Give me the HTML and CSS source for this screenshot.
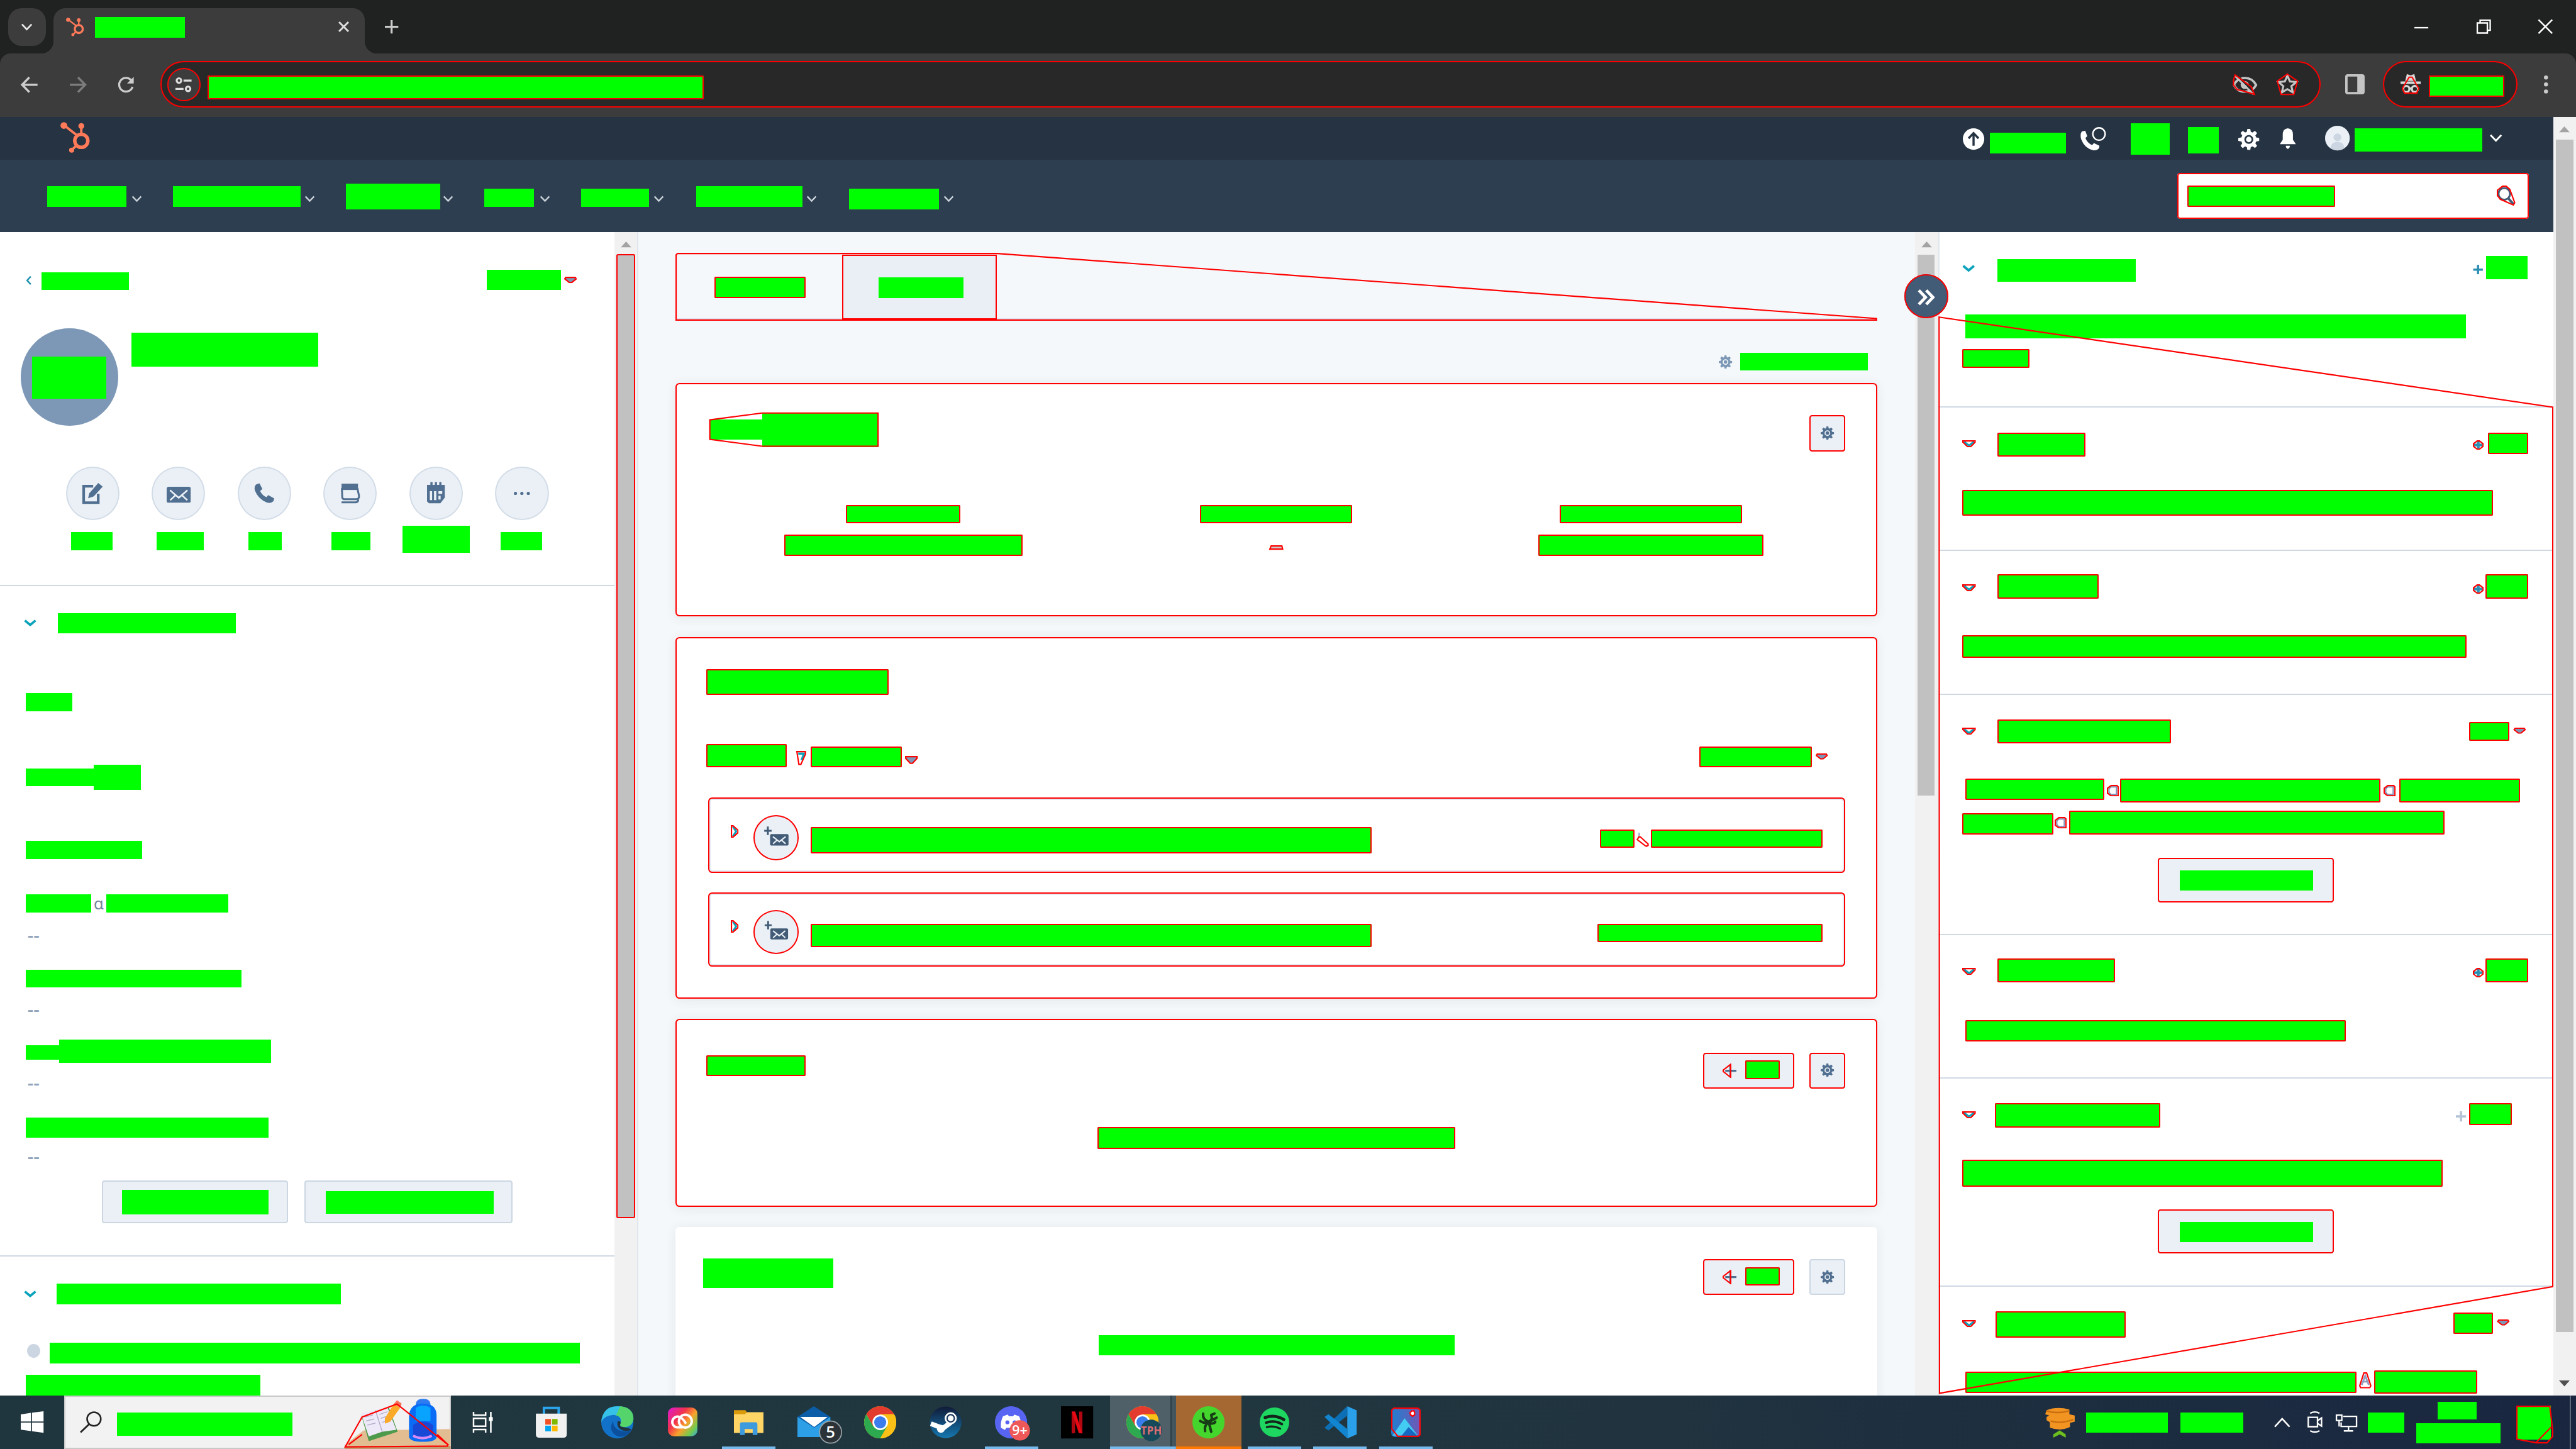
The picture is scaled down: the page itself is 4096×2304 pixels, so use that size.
FILE: index.html
```html
<!DOCTYPE html>
<html lang="en">
<head>
<meta charset="utf-8">
<title>CRM contact record</title>
<link rel="stylesheet" href="styles.css">
</head>
<body>
<svg class="defs" aria-hidden="true">
  <symbol id="sprocket" viewBox="0 0 23 23"><g fill="none" stroke="#ff7a59"><circle cx="15.6" cy="14" r="4.9" stroke-width="2.6"/><path d="M3 2.6 12.4 10M15.6 9V3.4M12 17.4 8.600 20.800" stroke-width="1.800"/></g><g fill="#ff7a59"><circle cx="2.600" cy="2.600" r="2.500"/><circle cx="15.600" cy="3" r="2.200"/><circle cx="8.400" cy="21" r="1.900"/></g></symbol>
  <symbol id="chev" viewBox="0 0 10 6"><path d="M1 .8 5 5 9 .8" fill="none" stroke="currentColor" stroke-width="1.400"/></symbol>
  <symbol id="chevbold" viewBox="0 0 10 5.300"><path d="M.8 .8 5 4.300 9.200 .8" fill="none" stroke="currentColor" stroke-width="1.900"/></symbol>
  <symbol id="chevred" viewBox="0 0 10.200 5.300"><path d="M1.200 1 5.100 4 9 1" fill="none" stroke="#0aa3bb" stroke-width="1.500"/><path d="M.5 .5H9.700V1.400L6.400 4.800H4L.5 1.400Z" class="ann"/></symbol>
  <symbol id="caret" viewBox="0 0 9.600 4.800"><path d="M1.200 .5H8.400L9.100 1.600 5.800 4.300H3.900L.5 1.600Z" fill="#7c98b6" class="annf"/></symbol>
  <symbol id="plus" viewBox="0 0 8 8"><path d="M4 0V8M0 4H8" stroke="currentColor" stroke-width="1.800"/></symbol>
  <symbol id="plusred" viewBox="0 0 8.100 7.200"><path d="M4.050 .6V6.600M.8 3.600H7.300" stroke="#2b8fb3" stroke-width="2"/><path d="M3.200 .5H4.900L7.600 2.600V4.600L4.900 6.700H3.200L.5 4.600V2.600Z" class="ann"/></symbol>
  <symbol id="gear" viewBox="0 0 16 16"><path fill="currentColor" fill-rule="evenodd" d="M6.900 0h2.200l.4 2.200 1.300.5L12.600 1.400l1.700 1.700L13 5l.6 1.400 2.400.5v2.200l-2.400.5L13 11l1.300 1.900-1.600 1.600-1.900-1.200-1.300.5L9.100 16H6.900l-.4-2.200-1.300-.5-1.800 1.300-1.700-1.700L3 11l-.6-1.400L0 9.100V6.900l2.400-.5L3 5 1.700 3.100l1.700-1.700 1.800 1.300 1.300-.5ZM8 4.600A3.400 3.400 0 1 0 8 11.400 3.400 3.400 0 0 0 8 4.600Z"/><circle cx="8" cy="8" r="2.100" fill="currentColor"/></symbol>
  <symbol id="mail" viewBox="0 0 18 12"><rect width="18" height="12" rx="1.600" fill="currentColor"/><path d="M2.500 2.600 9 8.200l6.500-5.600M2.600 10 6.700 6.200M15.400 10 11.300 6.200" fill="none" stroke="#eaf0f6" stroke-width="1.200"/></symbol>
  <symbol id="addmail" viewBox="0 0 34 34"><path d="M10.700 8.600V15M8 11.800H13.500" stroke="#425b76" stroke-width="1.400"/><rect x="12.400" y="14.300" width="13.800" height="8.600" rx="1" fill="#425b76"/><path d="M14.500 16.200 19.300 20 24 16.200M14.600 21.500 17.400 19M24 21.500 21.200 19" fill="none" stroke="#eaf0f6" stroke-width="1"/></symbol>
  <symbol id="right" viewBox="0 0 5.800 9.400"><path d="M1.600 1 4 4.700 1.600 8.400" fill="none" stroke="#0aa3bb" stroke-width="1.500"/><path d="M.5 .5H1.700L5.300 3.700V5.700L1.700 8.900H.5Z" class="ann"/></symbol>
  <symbol id="addred" viewBox="0 0 10.400 10.900"><path d="M5.800 1V10M2 5.450H10.400" stroke="#516f90" stroke-width="1.500"/><path d="M6 .6V10.300L.5 6V4.900Z" class="ann"/></symbol>
  <symbol id="letter" viewBox="0 0 9 8.600"><path d="M3 1.500H7.200V7.200H3L1.600 5.600V3Z" fill="#fff" stroke="#7f8fb8" stroke-width="1"/><path d="M3.200 .5H7.500L8.500 1.500V8.100H3L.5 6.200V2.500Z" class="ann"/></symbol>
  <symbol id="up" viewBox="0 0 8 4.400"><path d="M4 0 8 4.400H0Z" fill="currentColor"/></symbol>
  <symbol id="chrome" viewBox="0 0 24 24"><circle cx="12" cy="12" r="12" fill="#fbc116"/><path d="M1.600 6A12 12 0 0 1 22.400 6H12L6.800 15Z" fill="#e33b2e"/><path d="M1.600 6A12 12 0 0 0 12 24L17.200 15H6.800Z" fill="#2da94f"/><path d="M22.400 6A12 12 0 0 1 12 24L17.200 15 15 6Z" fill="#fbc116"/><circle cx="12" cy="12" r="5.800" fill="#fff"/><circle cx="12" cy="12" r="4.500" fill="#3b7ded"/></symbol>
</svg>

<header class="tabstrip row">
  <div class="tabsearch"><svg class="ic ts-ic"><use href="#chev"/></svg></div>
  <div class="tab row">
    <svg class="ic tab-logo"><use href="#sprocket"/></svg>
    <i class="bar tab-title"></i>
    <svg class="ic tab-x" viewBox="0 0 8 8"><path d="M.5 .5 7.500 7.500M7.500 .5 .5 7.500" stroke="#ddd" stroke-width="1.400"/></svg>
  </div>
  <svg class="ic tab-plus" viewBox="0 0 10 10"><path d="M5 0V10M0 5H10" stroke="#ccc" stroke-width="1.500"/></svg>
  <svg class="ic win-min" viewBox="0 0 10.400 1"><path d="M0 .5H10.400" stroke="#fff" stroke-width="1.100"/></svg>
  <svg class="ic win-res" viewBox="0 0 10.600 10.600"><path d="M.5 2.600H8V10.100H.5ZM2.600 2.600V.5H10.100V8H8" fill="none" stroke="#fff" stroke-width="1.100"/></svg>
  <svg class="ic win-x" viewBox="0 0 10.600 10.600"><path d="M.2 .2 10.400 10.400M10.400 .2 .2 10.400" stroke="#fff" stroke-width="1.100"/></svg>
</header>

<div class="toolbar row">
  <svg class="ic tb-back" viewBox="0 0 12.500 12"><path d="M6.400 .5 1 6 6.400 11.500M1 6H12.500" fill="none" stroke="#ccc" stroke-width="1.600"/></svg>
  <svg class="ic tb-fwd" viewBox="0 0 12.500 12"><path d="M6.100 .5 11.500 6 6.100 11.500M11.500 6H0" fill="none" stroke="#7c7c7c" stroke-width="1.600"/></svg>
  <svg class="ic tb-rel" viewBox="0 0 13 13"><path d="M10.700 3.200A5.300 5.300 0 1 0 11.600 8" fill="none" stroke="#ccc" stroke-width="1.600"/><path d="M12.500 .3V5.500H7.300Z" fill="#ccc"/></svg>
  <div class="url row mark">
    <div class="site mark"><svg class="ic site-ic" viewBox="0 0 12 11"><g fill="none" stroke="#ddd" stroke-width="1.500"><circle cx="2.600" cy="2.400" r="1.700"/><path d="M6 2.400H12M0 8.600H6"/><circle cx="9.400" cy="8.600" r="1.700"/></g></svg></div>
    <i class="bar mark url-text"></i>
    <svg class="ic url-eye" viewBox="0 0 18.500 15.500"><path d="M1 8Q3.500 2.800 9.200 2.800T17.500 8Q15 13 9.200 13T1 8Z" fill="none" stroke="#c4c4c4" stroke-width="1.700"/><circle cx="9" cy="8" r="3" fill="#c4c4c4"/><path d="M3.500 1 17 14.500" stroke="#282828" stroke-width="1.400"/><path d="M2 1.500 15.500 15" stroke="#c4c4c4" stroke-width="1.400"/><path d="M1.800 .5 14 9.500 16.200 15 8.500 12.700 3.500 11.500 .6 8 .8 4Z" class="ann"/></svg>
    <svg class="ic url-star" viewBox="0 0 16 16"><path d="M8 1.500 9.900 5.900 14.600 6.300 11 9.400 12.100 14 8 11.600 3.900 14 5 9.400 1.400 6.300 6.100 5.900Z" fill="none" stroke="#c4c4c4" stroke-width="1.500"/><path d="M8 .4 15.600 5.600 12.800 15.600H3.300L.5 5.600Z" class="ann"/></svg>
  </div>
  <svg class="ic tb-side" viewBox="0 0 14.500 15"><rect x=".9" y=".9" width="12.700" height="13.200" rx="1" fill="none" stroke="#c4c4c4" stroke-width="1.800"/><path d="M9 1H13.500V14H9Z" fill="#c4c4c4"/></svg>
  <div class="incog row mark">
    <svg class="ic inc-ic" viewBox="0 0 15 15"><path d="M3.500 5.500 4.700 .3 7.500 1.300 10.300 .3 11.500 5.500ZM0 5.900H15V7.700H0Z" fill="#d8d8d8"/><g fill="none" stroke="#d8d8d8" stroke-width="1.600"><circle cx="4.300" cy="11.500" r="2.300"/><circle cx="10.700" cy="11.500" r="2.300"/><path d="M6.500 11.100H8.500"/></g><path d="M6.400 2.700H8.600L13.500 11 12 14.600H3L1.400 11Z" class="ann"/></svg>
    <i class="bar mark inc-text"></i>
  </div>
  <svg class="ic tb-dots" viewBox="0 0 4 13.400"><g fill="#ccc"><circle cx="2" cy="1.500" r="1.500"/><circle cx="2" cy="6.700" r="1.500"/><circle cx="2" cy="11.900" r="1.500"/></g></svg>
</div>

<div class="app-window">
  <div class="app-main">
    <div class="topbar row">
      <svg class="ic hs-logo"><use href="#sprocket"/></svg>
      <svg class="ic hs-up" viewBox="0 0 16 16"><circle cx="8" cy="8" r="8" fill="#fff"/><path d="M8 13V4M4.300 7.500 8 3.600 11.700 7.500" fill="none" stroke="#253342" stroke-width="1.600"/></svg>
      <i class="bar hs-b1"></i>
      <svg class="ic hs-phone" viewBox="0 0 19.500 17.800"><path d="M1.500 3.300 4 2.700 5.600 6.800 4.200 8.200Q5.500 11.800 9.200 13.500L10.500 12 14.600 13.900 14.500 15.500Q13 17.800 10 17.300 3.500 15.800 1 9 0 5.500 1.500 3.300Z" fill="#fff"/><circle cx="14.300" cy="5.200" r="4.600" fill="none" stroke="#fff" stroke-width="1.100"/></svg>
      <i class="bar hs-b2"></i><i class="bar hs-b3"></i>
      <svg class="ic hs-gear"><use href="#gear"/></svg>
      <svg class="ic hs-bell" viewBox="0 0 12 15.300"><path d="M6 0Q9.800 .4 9.800 4.500V8.500L12 11.800H0L2.200 8.500V4.500Q2.200 .4 6 0ZM4.400 13H7.600Q7.200 15.300 6 15.300T4.400 13Z" fill="#fff"/></svg>
      <svg class="ic hs-av" viewBox="0 0 18.400 18.400"><circle cx="9.200" cy="9.200" r="9.200" fill="#eaf0f6"/><circle cx="9.200" cy="8.600" r="2.900" fill="#cbd6e2"/><path d="M4 16.700Q4.500 12 9.200 12T14.400 16.700Q9.200 20 4 16.700Z" fill="#cbd6e2"/></svg>
      <i class="bar hs-b4"></i>
      <svg class="ic hs-chev"><use href="#chev"/></svg>
    </div>
    <nav class="nav row">
      <i class="bar n1"></i><svg class="ic nc g4"><use href="#chev"/></svg>
      <i class="bar n2"></i><svg class="ic nc g3"><use href="#chev"/></svg>
      <i class="bar n3"></i><svg class="ic nc g2"><use href="#chev"/></svg>
      <i class="bar n4"></i><svg class="ic nc g4"><use href="#chev"/></svg>
      <i class="bar n5"></i><svg class="ic nc g3"><use href="#chev"/></svg>
      <i class="bar n6"></i><svg class="ic nc g3"><use href="#chev"/></svg>
      <i class="bar n7"></i><svg class="ic nc g3"><use href="#chev"/></svg>
      <div class="search row mark">
        <i class="bar mark search-text"></i>
        <svg class="ic search-ic" viewBox="0 0 13.800 15"><circle cx="5.600" cy="6.200" r="4.300" fill="none" stroke="#425b76" stroke-width="1.400"/><path d="M8.500 9.500 12.600 14" stroke="#425b76" stroke-width="1.800"/><path d="M4.300 .5H7L9.700 2.800 13.400 12.800 12.400 14.500 2.600 10.200 .5 7.500V3.500Z" class="ann"/></svg>
      </div>
    </nav>

    <div class="columns">
      <aside class="left">
        <div class="row l-top">
          <svg class="ic l-back" viewBox="0 0 4.300 6.500"><path d="M3.700 .3 1 3.250 3.700 6.200" fill="none" stroke="#2495b0" stroke-width="1.200"/></svg>
          <i class="bar l-b1"></i><i class="bar l-b2"></i>
          <svg class="ic l-caret"><use href="#caret"/></svg>
        </div>
        <div class="row l-id">
          <div class="avatar row"><i class="bar av-b"></i></div>
          <i class="bar l-name"></i>
        </div>
        <div class="actions rule">
          <div class="act"><span class="disc"><svg class="ic a18" viewBox="0 0 18 18"><path d="M9.500 3.500H2V16.500H13.500V9.500" fill="none" stroke="currentColor" stroke-width="2.100"/><path d="M5.500 13 6.500 9 13.500 1 17 3.800 10 11.500Z" fill="currentColor"/></svg></span><i class="bar ac1"></i></div>
          <div class="act"><span class="disc"><svg class="ic a-mail"><use href="#mail"/></svg></span><i class="bar ac2"></i></div>
          <div class="act"><span class="disc"><svg class="ic a-ph" viewBox="0 0 15 15"><path d="M1.600 1 4 .2 6.200 4.500 4.500 6Q6 9.200 9.200 10.600L10.600 9 15 11.500 14.500 13.500Q12.500 15.500 9.500 14.500 3 12 .6 5.500-.2 2.500 1.600 1Z" fill="currentColor"/></svg></span><i class="bar ac3"></i></div>
          <div class="act"><span class="disc"><svg class="ic a18" viewBox="0 0 18 18"><path d="M2 1.500H15V6.500H2Z" fill="currentColor"/><path d="M2.300 5 2.600 12.500Q3 13.800 4.500 13.800H14Q16 13.500 15.800 11L14.500 5M2 16.300H13Q15 16.300 15.300 14" fill="none" stroke="currentColor" stroke-width="1.500"/></svg></span><i class="bar ac4"></i></div>
          <div class="act"><span class="disc"><svg class="ic a18" viewBox="0 0 18 18"><path d="M2 2.500H16V12.500L12.500 17H3.500L2 15.500Z" fill="currentColor"/><path d="M5.500 .3V4M9 .3V4M12.500 .3V4" stroke="currentColor" stroke-width="1.700"/><path d="M4.200 7.500H6V14.500H4.200ZM7.500 7.500H9.300V14.500H7.500ZM11 7.500H14V9.500H11ZM11 11H12.700V14H11Z" fill="#eaf0f6"/></svg></span><i class="bar ac5"></i></div>
          <div class="act"><span class="disc"><svg class="ic a-dots" viewBox="0 0 12 2.400"><g fill="currentColor"><circle cx="1.200" cy="1.200" r="1.200"/><circle cx="6" cy="1.200" r="1.200"/><circle cx="10.800" cy="1.200" r="1.200"/></g></svg></span><i class="bar ac6"></i></div>
        </div>
        <div class="row r1"><svg class="ic l-chev"><use href="#chevbold"/></svg><i class="bar p1"></i></div>
        <div class="row r2"><i class="bar p2"></i></div>
        <div class="row r3"><i class="bar p3"></i><i class="bar p4"></i></div>
        <div class="row r4"><i class="bar p5"></i></div>
        <div class="row r5"><i class="bar p6"></i><span class="ltr">ɑ</span><i class="bar p7"></i></div>
        <div class="none r6">--</div>
        <div class="row r7"><i class="bar p8"></i></div>
        <div class="none r8">--</div>
        <div class="row r9"><i class="bar p9"></i><i class="bar p10"></i></div>
        <div class="none r6">--</div>
        <div class="row r7"><i class="bar p11"></i></div>
        <div class="none r10">--</div>
        <div class="row r11 rule">
          <div class="btn row bt1"><i class="bar bt1-b"></i></div>
          <div class="btn row bt2"><i class="bar bt2-b"></i></div>
        </div>
        <div class="row r12"><svg class="ic l-chev"><use href="#chevbold"/></svg><i class="bar p12"></i></div>
        <div class="row r13"><span class="dot"></span><i class="bar p13"></i></div>
        <div class="row"><i class="bar p14"></i></div>
      </aside>
      <div class="scroll"><svg class="ic sc-up"><use href="#up"/></svg><div class="thumb mark th-left"></div></div>

      <main class="center">
        <div class="tabs row">
          <i class="bar mark t1"></i>
          <div class="t2 row mark"><i class="bar t2-b"></i></div>
          <svg class="over" viewBox="0 0 895.700 50.600" preserveAspectRatio="none"><path d="M.5 1.500 1.500 .5H240L895.200 49V50.100H.5Z" class="ann"/></svg>
        </div>
        <div class="row cust"><svg class="ic cust-gear"><use href="#gear"/></svg><i class="bar cust-b"></i></div>

        <section class="card mark c1">
          <div class="row c1-head">
            <i class="bar h1a"></i><i class="bar h1b"></i>
            <div class="btn mark sq h1-btn"><svg class="ic g10"><use href="#gear"/></svg></div>
            <svg class="over" viewBox="0 0 895.700 91"><path d="M25.600 27.500 64.500 22.400H151V47.100H64.500L25.600 42Z" class="ann"/></svg>
          </div>
          <div class="row c1-r1"><i class="bar mark d1"></i><i class="bar mark d2"></i><i class="bar mark d3"></i></div>
          <div class="row"><i class="bar mark d4"></i><svg class="ic dash" viewBox="0 0 10.600 3.400"><path d="M1.500 .5H9.500L10.100 2.900H.5Z" fill="#ccc" class="annf"/></svg><i class="bar mark d5"></i></div>
        </section>

        <section class="card mark c2">
          <div class="row c2-head"><i class="bar mark e1"></i></div>
          <div class="row c2-filter">
            <i class="bar mark e2"></i>
            <svg class="ic funnel" viewBox="0 0 7.400 10.500"><path d="M1.500 2H5.800L4 7" fill="none" stroke="#0aa3bb" stroke-width="1.600"/><path d="M.5 .5H6.900V2.500L3.500 10H2Z" class="ann"/></svg>
            <i class="bar mark e3"></i><svg class="ic e-car1" viewBox="0 0 9.500 6"><path d="M.5 .5H9V1.800L5.600 5.500H3.900L.5 1.800Z" fill="#7c98b6" class="annf"/></svg>
            <i class="bar mark e4"></i><svg class="ic e-car2"><use href="#caret"/></svg>
          </div>
          <div class="item row mark it1"><svg class="ic it-ch"><use href="#right"/></svg><div class="it-disc mark"><svg><use href="#addmail"/></svg></div><i class="bar mark f1"></i><i class="bar mark f2"></i>
            <svg class="ic f-ic" viewBox="0 0 9.200 10.600"><path d="M2 0V6.500" stroke="#8fa3c8" stroke-width="1"/><path d="M1.800 3.200H3L8.700 8.400V9.500L7.500 10.100 6.600 9.800 .6 5.200Z" class="annf" fill="#fff"/></svg>
            <i class="bar mark f3"></i></div>
          <div class="item row mark it2"><svg class="ic it-ch"><use href="#right"/></svg><div class="it-disc d2nd mark"><svg><use href="#addmail"/></svg></div><i class="bar mark f4"></i><i class="bar mark f5"></i></div>
        </section>

        <section class="card mark c3">
          <div class="row c3-head"><i class="bar mark k1"></i>
            <div class="btn row mark add"><svg class="ic add-ic"><use href="#addred"/></svg><i class="bar mark add-b"></i></div>
            <div class="btn mark sq k-sq"><svg class="ic g10"><use href="#gear"/></svg></div></div>
          <div class="row"><i class="bar mark k2"></i></div>
        </section>

        <section class="card c4">
          <div class="row c3-head"><i class="bar k3"></i>
            <div class="btn row mark add add2"><svg class="ic add-ic"><use href="#addred"/></svg><i class="bar mark add-b"></i></div>
            <div class="btn sq k-sq2"><svg class="ic g10"><use href="#gear"/></svg></div></div>
          <div class="row"><i class="bar k4"></i></div>
        </section>
      </main>
      <div class="scroll"><svg class="ic sc-up"><use href="#up"/></svg><div class="thumb th-mid"></div>
        <div class="toggle mark"><svg class="ic tog-ic" viewBox="0 0 13 12"><path d="M1 .8 6 6 1 11.200M6.500 .8 11.500 6 6.500 11.200" fill="none" stroke="#fff" stroke-width="2.200"/></svg></div></div>

      <aside class="right">
        <section class="sec s0 rule">
          <div class="row s0-h"><svg class="ic q-chev"><use href="#chevbold"/></svg><i class="bar q1"></i><svg class="ic q-plus"><use href="#plus"/></svg><i class="bar q2"></i></div>
          <div class="row s0-r"><i class="bar q3"></i></div>
          <div class="row"><i class="bar mark q4"></i></div>
        </section>
        <section class="sec s1 rule">
          <div class="row s1-h"><svg class="ic rc"><use href="#chevred"/></svg><i class="bar mark u1"></i><svg class="ic rp u1p"><use href="#plusred"/></svg><i class="bar mark u2"></i></div>
          <div class="row"><i class="bar mark u3"></i></div>
        </section>
        <section class="sec s1 rule">
          <div class="row s2-h"><svg class="ic rc"><use href="#chevred"/></svg><i class="bar mark v1"></i><svg class="ic rp v1p"><use href="#plusred"/></svg><i class="bar mark v2"></i></div>
          <div class="row"><i class="bar mark v3"></i></div>
        </section>
        <section class="sec s3 rule">
          <div class="row s2-h"><svg class="ic rc"><use href="#chevred"/></svg><i class="bar mark w1"></i><i class="bar mark w2"></i><svg class="ic w-car"><use href="#caret"/></svg></div>
          <div class="row s3-r1"><i class="bar mark w3"></i><svg class="ic lt lt1"><use href="#letter"/></svg><i class="bar mark w4"></i><svg class="ic lt lt1"><use href="#letter"/></svg><i class="bar mark w5"></i></div>
          <div class="row s3-r2"><i class="bar mark w6"></i><svg class="ic lt lt2"><use href="#letter"/></svg><i class="bar mark w7"></i></div>
          <div class="row"><div class="btn row mark rb"><i class="bar rb-b"></i></div></div>
        </section>
        <section class="sec s4 rule">
          <div class="row s4-h"><svg class="ic rc"><use href="#chevred"/></svg><i class="bar mark x1"></i><svg class="ic rp x1p"><use href="#plusred"/></svg><i class="bar mark x2"></i></div>
          <div class="row"><i class="bar mark x3"></i></div>
        </section>
        <section class="sec s5 rule">
          <div class="row s5-h"><svg class="ic rc"><use href="#chevred"/></svg><i class="bar mark y1"></i><svg class="ic y-plus"><use href="#plus"/></svg><i class="bar mark y2"></i></div>
          <div class="row s5-r"><i class="bar mark y3"></i></div>
          <div class="row"><div class="btn row mark rb rb2"><i class="bar rb-b"></i></div></div>
        </section>
        <section class="sec">
          <div class="row s6-h"><svg class="ic rc"><use href="#chevred"/></svg><i class="bar mark z1"></i><i class="bar mark z2"></i><svg class="ic z-car"><use href="#caret"/></svg></div>
          <div class="row"><i class="bar mark z3"></i><svg class="ic z-a" viewBox="0 0 9.300 12"><path d="M2 9.500 4.600 2.500 7.300 9.500M3 7H6.400" fill="none" stroke="#8f9cc0" stroke-width="1.300"/><path d="M3.600 .5H5.700L8.800 10 8 11.500H1.200L.5 10Z" class="ann"/></svg><i class="bar mark z4"></i></div>
        </section>
        <svg class="over" viewBox="0 0 458.500 867" preserveAspectRatio="none"><path d="M.6 63.400 458 130.500V786L.9 865.500Z" class="ann"/></svg>
      </aside>
    </div>
  </div>
  <div class="scroll page"><svg class="ic sc-up"><use href="#up"/></svg><div class="thumb th-page"></div><svg class="ic sc-down"><use href="#up"/></svg></div>
</div>

<footer class="taskbar row">
  <svg class="ic k-win" viewBox="0 0 17 16"><path d="M0 2.300 7.600 1.200V7.600H0ZM8.400 1.100 17 0V7.600H8.400ZM0 8.400H7.600V14.800L0 13.700ZM8.400 8.400H17V16L8.400 14.900Z" fill="#fff"/></svg>
  <div class="k-search row">
    <svg class="ic k-mag" viewBox="0 0 16.300 16"><circle cx="10.500" cy="5.800" r="5.100" fill="none" stroke="#222" stroke-width="1.200"/><path d="M6.900 9.600 .5 15.700" stroke="#222" stroke-width="1.300"/></svg>
    <i class="bar k-text"></i>
    <svg class="ic k-ill" viewBox="0 0 79 40">
      <path d="M14 26 79 25V40H0V37Z" fill="#e3bd92"/><path d="M0 37.500H79V40H0Z" fill="#c39a6e"/>
      <path d="M12.500 15 33 9 39.500 27 18 34Z" fill="#4e9a4c"/><path d="M12 13 23 11 32 9 38.500 25.500 28 27 18 30.500Z" fill="#eee9f8"/><path d="M23 11 28 27M15 16 21 14.500M16 19 22 17.500M17 22 23 20.500M26 14 32 12M27 17 33 15M28 20 34 18" stroke="#b7b0cc" stroke-width=".7" fill="none"/>
      <path d="M30 17 36.500 6.500 41.500 9 34 19.500 30 21Z" fill="#fba928"/><path d="M36.500 6.500 39 3.500 42.500 6 41.500 9Z" fill="#f5735e"/>
      <path d="M53 7Q53 2.500 58.500 2.500T64 7V9H53Z" fill="#2f7cf0"/><path d="M48 16Q48 6 58.500 6T68.500 16V31Q68 34.500 58.500 34.500T48 31Z" fill="#0a6cf5"/><path d="M53 9Q58 6 64 9V19H53Z" fill="#08a3ff"/><path d="M51 22Q58 17 66 22V31Q58 34 51 31Z" fill="#1947d6"/><path d="M51 30Q58 33.500 65 30" stroke="#d98cf5" stroke-width="1.800" fill="none"/>
      <path d="M.4 38.300 13 16 39 6.300 77 36.700 76.500 37.700Z M3 36.500 13 29M69 29 77.500 37" class="ann"/>
    </svg>
  </div>
  <div class="app tv"><svg class="ic i16" viewBox="0 0 16 16"><path d="M.7 0V2.500H10V0M.7 16V13.500H10V16M.7 5H10V11H.7ZM14 0V16" fill="none" stroke="#fff" stroke-width="1.200"/><path d="M12.500 4H15.500V7H12.500Z" fill="#fff"/></svg></div>
  <div class="app"><svg class="ic i24" viewBox="0 0 24 24"><path d="M6.500 6V1.200H17.500V6" fill="none" stroke="#2ba6ee" stroke-width="1.800"/><path d="M.5 5.500H23.500V21Q23.500 23.500 21 23.500H3Q.5 23.500 .5 21Z" fill="#f1f1f1"/><path d="M7.500 9.500H11.700V13.700H7.500Z" fill="#f25022"/><path d="M12.500 9.500H16.700V13.700H12.500Z" fill="#7fba00"/><path d="M7.500 14.500H11.700V18.700H7.500Z" fill="#00a4ef"/><path d="M12.500 14.500H16.700V18.700H12.500Z" fill="#ffb900"/></svg></div>
  <div class="app"><svg class="ic i24" viewBox="0 0 24 24"><circle cx="12" cy="12" r="12" fill="#1272c9"/><path d="M0 12Q1 0 12 0 24 0 24 9.500 23 16 16 15.500 13 15 14.500 12.500 15.500 7 9 6.500 2 7 0 12Z" fill="#35c1e8"/><path d="M14 0Q24 1 24 9.500 23 16 16 15.500 13 15 14.500 12.500 16 8 11 6.800Z" fill="#55d46c"/><path d="M9 11Q5 17 10.500 21.500 15 24.500 20.500 20.500 22 19 22.500 17.500 17 20 12.500 17.500 8.500 15 9 11Z" fill="#0c4f9c"/><path d="M12.300 11Q11 16 16 18 19.500 19 22.500 17.300 20 16 16 15.500 13 15 14.500 12.500 14.600 11 12.300 11Z" fill="#20353f"/></svg></div>
  <div class="app"><svg class="ic i22" viewBox="0 0 22 22"><defs><linearGradient id="cc" x1="0" y1=".2" x2="1" y2="1"><stop offset="0" stop-color="#e21fb5"/><stop offset=".3" stop-color="#f2334b"/><stop offset=".55" stop-color="#f9a12c"/><stop offset=".8" stop-color="#72cc4e"/><stop offset="1" stop-color="#31a5e8"/></linearGradient></defs><rect width="22" height="21.500" rx="4.500" fill="url(#cc)"/><g fill="none" stroke="#fff" stroke-width="1.800"><circle cx="13" cy="10.200" r="4.800"/><path d="M11 14.800H7.500A4 4 0 1 1 9 7.200Q11.500 8.500 13.500 12"/></g></svg></div>
  <div class="app open"><svg class="ic i22" viewBox="0 0 22 20"><path d="M0 1H8.500L10 3V6H0Z" fill="#d99a0c"/><path d="M0 4H8L10 2.500H22V18H0Z" fill="#ffd566"/><path d="M4.500 11.500Q4.500 10 6 10H16Q17.500 10 17.500 11.500V19.500H14V15H8V19.500H4.500Z" fill="#3d9bdd"/></svg></div>
  <div class="app"><svg class="ic i-mail" viewBox="0 0 34 28"><path d="M0 8 12.200 0 24.500 8V23H0Z" fill="#0b5da8"/><path d="M0 8 12.500 16 24.500 8V23H0Z" fill="#2c9fe6"/><path d="M2 8H22.500L12.500 15.500Z" fill="#fff"/><circle cx="24.700" cy="19.300" r="8.200" fill="#2b3338" stroke="#9aa3a8" stroke-width=".8"/><text x="24.700" y="23.500" class="badge5">5</text></svg></div>
  <div class="app"><svg class="ic i24"><use href="#chrome"/></svg></div>
  <div class="app"><svg class="ic i24" viewBox="0 0 24 24"><defs><linearGradient id="st" x1="0" y1="0" x2="0" y2="1"><stop offset="0" stop-color="#111a38"/><stop offset="1" stop-color="#1578b0"/></linearGradient></defs><circle cx="12" cy="12" r="11.800" fill="url(#st)"/><path d="M1 13 10 16.500 16 12" fill="none" stroke="#fff" stroke-width="3.600"/><circle cx="15.800" cy="9" r="4.500" fill="#fff"/><circle cx="15.800" cy="9" r="2.700" fill="none" stroke="#16325a" stroke-width="1"/><circle cx="8.500" cy="16.800" r="3" fill="#fff"/></svg></div>
  <div class="app open"><svg class="ic i-disc" viewBox="0 0 28 28"><circle cx="12" cy="12" r="12" fill="#5865f2"/><path d="M6 7.500 9.500 6.200 10.500 7.500H13.500L14.500 6.200 18 7.500Q20 11.500 19.500 16L16.500 17.700 15.500 16H8.500L7.500 17.700 4.500 16Q4 11.500 6 7.500Z" fill="#fff"/><circle cx="9.300" cy="12" r="1.500" fill="#5865f2"/><circle cx="14.700" cy="12" r="1.500" fill="#5865f2"/><circle cx="18.500" cy="18" r="7.600" fill="#ee5858"/><text x="18.500" y="21.500" class="badge9">9+</text></svg></div>
  <div class="app"><svg class="ic i24" viewBox="0 0 24 24"><path d="M0 0H24V24H0Z" fill="#000"/><path d="M8 4H10.500V20L8 20.300ZM13.500 4H16V20.300L13.500 20Z" fill="#b20710"/><path d="M8 4H10.600L16 20.300 13.300 20Z" fill="#e50914"/></svg></div>
  <div class="app open active"><svg class="ic i-disc" viewBox="0 0 28 28"><use href="#chrome" width="24" height="24"/><circle cx="18.500" cy="18" r="8" fill="#164a5b"/><text x="18.500" y="21" class="badgeT">TPH</text></svg></div>
  <div class="app razer"><svg class="ic i24" viewBox="0 0 24 24"><circle cx="12" cy="12" r="12" fill="#44d62c"/><g fill="none" stroke="#173d16" stroke-width="1.900" stroke-linecap="round" stroke-linejoin="round"><path d="M8 5.500Q7.500 10 12 11.500 15.500 10.500 14 6.500L16.500 5.500"/><path d="M5.800 11Q9 13 12 12L18 8.500M12 12Q8.500 14.500 9.500 18.500M12 12.500Q16.500 13.500 17 11.500M12.500 13 14 19"/></g></svg></div>
  <div class="app open"><svg class="ic i22" viewBox="0 0 22 22"><circle cx="11" cy="11" r="11" fill="#1ed760"/><g fill="none" stroke="#15241b" stroke-linecap="round"><path d="M4 7.500Q11.500 5 18 9" stroke-width="2.200"/><path d="M4.800 11.300Q11 9.200 16.500 12.400" stroke-width="1.900"/><path d="M5.300 14.700Q10.500 13.200 15.200 15.800" stroke-width="1.500"/></g></svg></div>
  <div class="app open"><svg class="ic i24" viewBox="0 0 24 24"><path d="M17 0 24 3V21L17 24Z" fill="#2aa0ea"/><path d="M17 0V7L3 18 0 16Z" fill="#0c6fb5"/><path d="M17 24V17L3 6 0 8Z" fill="#1185cf"/></svg></div>
  <div class="app open"><svg class="ic i22" viewBox="0 0 22 22"><defs><linearGradient id="ph" x1="0" y1="0" x2="1" y2="0"><stop offset="0" stop-color="#1f7fd0"/><stop offset="1" stop-color="#7357b5"/></linearGradient></defs><rect width="22" height="22" rx="3" fill="url(#ph)"/><path d="M1 21 10 8 20 21Z" fill="#44cdf3"/><path d="M7 22 13 14.500 20 21.500Z" fill="#1768c2"/><circle cx="16" cy="4.300" r="1.500" fill="#fff"/><path d="M2 .5H20L21.500 2V20.500L20 21.500H5L.5 16V2ZM14 4 15.500 2.500H17L17.500 4V5.500L16 6.500 14.500 5.500Z" class="ann"/></svg></div>

  <svg class="ic y-coin" viewBox="0 0 22.400 23"><path d="M1 2Q9-1 18 1.500V5L22 6V10.500L18.500 11.500V14.500Q11 18 3.500 15V11L1 9.500V7L3 6 0 5Z" fill="#f29422"/><path d="M1 2.500Q9 5 18 2.500M4 10Q11 12.500 21 9" stroke="#c96f10" stroke-width="1.100" fill="none"/><path d="M6 22.500V20L10.800 17 15.300 20V22.500L10.800 20Z" fill="#6cbf1e"/></svg>
  <i class="bar y-b1"></i><i class="bar y-b2"></i>
  <svg class="ic y-up" viewBox="0 0 12 8"><path d="M.5 7.300 6 1.300 11.500 7.300" fill="none" stroke="#fff" stroke-width="1.200"/></svg>
  <svg class="ic y-cam" viewBox="0 0 11 16"><path d="M.6 4.500H7.500V11.500H.6ZM7.500 7 10.500 5V11L7.500 9M2 1.500Q5.500-.4 9 1.500M2 14.500Q5.500 16.400 9 14.500" fill="none" stroke="#fff" stroke-width="1.100"/></svg>
  <svg class="ic y-mon" viewBox="0 0 16 13"><path d="M5.500 1.500H15.500V9H4V6M9.500 9V12M6 12.300H13M.5 .5H4.500V4.500H.5ZM2.500 4.500V9" fill="none" stroke="#fff" stroke-width="1.100"/></svg>
  <i class="bar y-b3"></i>
  <div class="clock"><i class="bar y-b4"></i><i class="bar y-b5"></i></div>
  <svg class="ic y-note" viewBox="0 0 27.600 28.200"><path d="M0 0H25.800V25.400H0Z" fill="#0f0"/><path d="M.5 .5H25L27.100 18V23L23 27.700H15L.5 25ZM15 27.300 26 16" class="ann"/></svg>
  <span class="y-line"></span>
</footer>
</body>
</html>
```
FILE: styles.css
```css
/* One layout unit is a 1920th of the window width. */
:root { --u: calc(100vw / 1920); }
* { box-sizing: border-box; }
html, body { margin: 0; height: 100%; overflow: hidden; background: #202221; }
body { font-family: "Noto Sans", sans-serif; }
.defs { display: none; }
.ann { fill: none; stroke: #f00; stroke-width: 1; }
.annf { stroke: #f00; stroke-width: 1; }
.mark { outline: 2px solid #f00; outline-offset: -2px; }
.rule { border-bottom: 2px solid #cfd9e4; }

.row { display: flex; align-items: flex-start; }
.bar, .ic { display: block; flex: none; width: calc(var(--w) * var(--u)); height: calc(var(--h) * var(--u)); margin: calc(var(--t, 0) * var(--u)) 0 0 calc(var(--l, 0) * var(--u)); }
.bar { background: #0f0; }
.bar.mark { border-radius: 2px; }
.ic { overflow: visible; }
.over { position: absolute; left: 0; top: 0; width: 100%; height: 100%; overflow: visible; pointer-events: none; }

/* Sized containers share the same variables. */
.tabstrip, .toolbar, .tabsearch, .tab, .url, .site, .incog, .topbar, .nav, .search, .left .row, .left .none, .left .actions, .avatar, .disc, .dot, .thumb, .toggle, .tabs, .t2, .cust, .card, .card > .row, .btn, .item, .it-disc, .sec, .sec > .row, .k-search, .app, .clock {
  flex: none; height: calc(var(--h) * var(--u)); margin-top: calc(var(--t, 0) * var(--u)); margin-left: calc(var(--l, 0) * var(--u));
}
.tabsearch, .tab, .url, .site, .incog, .search, .avatar, .disc, .dot, .thumb, .toggle, .tabs, .t2, .card, .btn, .item, .it-disc, .k-search, .clock { width: calc(var(--w) * var(--u)); }
.row > *, .sec > *, .card > * { --t: 0; --l: 0; }

/* Browser tab strip */
.tabstrip { --h: 40; background: #202221; }
.tabstrip .tabsearch { --w: 28; --h: 28; --l: 6; --t: 6; border-radius: calc(10 * var(--u)); background: #3c3c3c; display: flex; align-items: center; justify-content: center; color: #e8e8e8; }
.ts-ic { --w: 9; --h: 5.500; --l: 0; --t: 0; }
.tabstrip .tab { position: relative; --w: 232; --h: 34; --l: 6; --t: 6; border-radius: calc(9 * var(--u)) calc(9 * var(--u)) 0 0; background: #3c3c3c; }
.tab::before, .tab::after { content: ""; position: absolute; bottom: 0; width: calc(9 * var(--u)); height: calc(9 * var(--u)); }
.tab::before { right: 100%; background: radial-gradient(circle calc(9 * var(--u)) at 0 0, transparent 98%, #3c3c3c); }
.tab::after { left: 100%; background: radial-gradient(circle calc(9 * var(--u)) at 100% 0, transparent 98%, #3c3c3c); }
.tab .tab-logo { --w: 14; --h: 14; --l: 9; --t: 7; }
.tab .tab-title { --w: 67; --h: 15.400; --l: 8; --t: 6.800; }
.tab .tab-x { --w: 8; --h: 8; --l: 114; --t: 10; }
.tabstrip .tab-plus { --w: 10; --h: 10; --l: 15; --t: 15; }
.tabstrip .win-min { --w: 10.400; --h: 1; --l: 1502.600; --t: 20; }
.tabstrip .win-res { --w: 10.600; --h: 10.600; --l: 36; --t: 14.700; }
.tabstrip .win-x { --w: 10.600; --h: 10.600; --l: 35.400; --t: 14.700; }

/* Browser toolbar */
.toolbar { --h: 47; background: #3c3c3c; border-radius: calc(8 * var(--u)) calc(8 * var(--u)) 0 0; }
.toolbar .tb-back { --w: 12.500; --h: 12; --l: 15.500; --t: 17; }
.toolbar .tb-fwd { --w: 12.500; --h: 12; --l: 24; --t: 17; }
.toolbar .tb-rel { --w: 12.500; --h: 13; --l: 23; --t: 16.500; }
.toolbar .url { --w: 1610.300; --h: 34.900; --l: 19.600; --t: 5.300; border-radius: calc(18 * var(--u)); background: #282828; }
.url .site { --w: 24.900; --h: 24.600; --l: 4.900; --t: 5.400; border-radius: 50%; background: #3c3c3c; display: flex; align-items: center; justify-content: center; }
.site-ic { --w: 12; --h: 11; --t: 0; --l: 0; margin: 0; }
.url .url-text { --w: 369.800; --h: 17.900; --l: 5.300; --t: 11; }
.url .url-eye { --w: 18.500; --h: 15.500; --l: 1139.500; --t: 10; }
.url .url-star { --w: 16; --h: 16; --l: 14.500; --t: 9.400; }
.toolbar .tb-side { --w: 14.500; --h: 15; --l: 18; --t: 15.300; }
.toolbar .incog { --w: 100; --h: 34.900; --l: 13.900; --t: 5.300; border-radius: calc(18 * var(--u)); background: #282828; }
.incog .inc-ic { --w: 15; --h: 15; --l: 13; --t: 9.700; }
.incog .inc-text { --w: 55.900; --h: 15.900; --l: 6.200; --t: 11; }
.toolbar .tb-dots { --w: 4; --h: 13.400; --l: 19.600; --t: 16.300; }

.app-window { display: flex; height: calc(953 * var(--u)); }
.app-main { width: calc(1903 * var(--u)); flex: none; }

/* Application header */
.topbar { --h: 32; background: #253342; color: #fff; }
.topbar .hs-logo { --w: 23; --h: 23; --l: 45; --t: 4; }
.topbar .hs-up { --w: 16; --h: 16; --l: 1395; --t: 8.800; }
.topbar .hs-b1 { --w: 57; --h: 15.500; --l: 4; --t: 11.700; }
.topbar .hs-phone { --w: 19.500; --h: 17.800; --l: 10; --t: 7.700; }
.topbar .hs-b2 { --w: 29; --h: 23.500; --l: 18.500; --t: 4.700; }
.topbar .hs-b3 { --w: 23.400; --h: 19.500; --l: 13.600; --t: 7.700; }
.topbar .hs-gear { --w: 15.700; --h: 15.700; --l: 14.300; --t: 9; }
.topbar .hs-bell { --w: 12; --h: 15.300; --l: 15.300; --t: 8.800; }
.topbar .hs-av { --w: 18.400; --h: 18.400; --l: 21.700; --t: 6.700; }
.topbar .hs-b4 { --w: 95.200; --h: 17.500; --l: 3.600; --t: 8.700; }
.topbar .hs-chev { --w: 10; --h: 6; --l: 5; --t: 13; }
.nav { --h: 54; background: #2d3e50; color: #cbd3da; }
.nav .n1 { --w: 59; --h: 15.500; --l: 35; --t: 19.700; }
.nav .n2 { --w: 95; --h: 15.500; --l: 23; --t: 19.700; }
.nav .n3 { --w: 70; --h: 19.400; --l: 23; --t: 17.800; }
.nav .n4 { --w: 37; --h: 13.500; --l: 23; --t: 21.700; }
.nav .n5 { --w: 51; --h: 13.500; --l: 23; --t: 21.700; }
.nav .n6 { --w: 79; --h: 15.500; --l: 24; --t: 19.700; }
.nav .n7 { --w: 67; --h: 15.500; --l: 24; --t: 21.700; }
.nav .nc { --w: 8; --h: 4.800; --t: 26.700; }
.nav .g4 { --l: 4; }
.nav .g3 { --l: 3; }
.nav .g2 { --l: 2; }
.nav .search { --w: 262.300; --h: 34.400; --l: 911.700; --t: 9.700; background: #fff; border-radius: calc(2 * var(--u)); }
.search .search-text { --w: 109.900; --h: 15.900; --l: 7.900; --t: 9.600; }
.search .search-ic { --w: 13.800; --h: 15; --l: 120.500; --t: 9.600; }

.columns { display: flex; height: calc(867 * var(--u)); }

/* Contact column */
.left { width: calc(458 * var(--u)); flex: none; background: #fff; overflow: hidden; }
.left .l-top { --h: 71.700; }
.left .l-back { --w: 4.300; --h: 6.500; --l: 19; --t: 33; }
.left .l-b1 { --w: 65; --h: 13.400; --l: 7.700; --t: 29.800; }
.left .l-b2 { --w: 55; --h: 15.300; --l: 267; --t: 27.900; }
.left .l-caret { --w: 9.500; --h: 4.800; --l: 2.300; --t: 33.200; }
.left .l-id { --h: 102.900; }
.left .avatar { --w: 72.500; --h: 72.500; --l: 15.700; border-radius: 50%; background: #7c98b6; }
.left .av-b { --w: 55.300; --h: 31; --l: 8; --t: 21.300; }
.left .l-name { --w: 139; --h: 25.400; --l: 9.800; --t: 3.100; }
.left .actions { --h: 89.300; display: flex; padding-left: calc(37 * var(--u)); color: #516f90; }
.act { width: calc(64 * var(--u)); display: flex; flex-direction: column; align-items: center; }
.disc { --w: 40; --h: 40.200; border-radius: 50%; background: #eaf0f6; border: 2px solid #d2dce7; display: flex; align-items: center; justify-content: center; }
.a18 { --w: 17; --h: 17; }
.a-mail { --w: 18; --h: 12; --t: 2; }
.a-ph { --w: 15; --h: 15; }
.a-dots { --w: 12; --h: 2.400; }
.act .bar { --h: 13.400; --t: 9; --l: 0; }
.act .ac1 { --w: 31; --l: -1; }
.act .ac2 { --w: 35; --l: 2.500; }
.act .ac3 { --w: 25; --l: 1; }
.act .ac4 { --w: 29; --l: 1; }
.act .ac5 { --w: 50; --h: 20.300; --t: 4; }
.act .ac6 { --w: 31; --l: -1; }
.left .r1 { --h: 79.900; }
.left .l-chev { --w: 9.400; --h: 5; --l: 17.800; --t: 25; color: #0aa3bb; }
.left .p1 { --w: 133; --h: 15.100; --l: 15.800; --t: 20; }
.left .r2 { --h: 53.200; }
.left .p2 { --w: 35; --h: 13.400; --l: 19; }
.left .r3 { --h: 56.800; }
.left .p3 { --w: 51; --h: 13.300; --l: 19; --t: 2.800; }
.left .p4 { --w: 35; --h: 19; }
.left .r4 { --h: 40; }
.left .p5 { --w: 87; --h: 13.400; --l: 19; }
.left .r5 { --h: 27.200; }
.left .p6 { --w: 49; --h: 13.400; --l: 19; }
.ltr { width: calc(11 * var(--u)); text-align: center; font-size: calc(12 * var(--u)); line-height: calc(14 * var(--u)); color: #74869c; }
.left .p7 { --w: 91; --h: 13.400; }
.left .none { padding-left: calc(20.500 * var(--u)); font-size: calc(14 * var(--u)); line-height: calc(7 * var(--u)); color: #8fa3bb; font-weight: 500; }
.left .r6 { --h: 28.800; }
.left .r7 { --h: 26.200; }
.left .p8 { --w: 161; --h: 13.400; --l: 19; }
.left .r8 { --h: 25.700; }
.left .r9 { --h: 29.300; }
.left .p9 { --w: 25; --h: 11.100; --l: 19; --t: 4.200; }
.left .p10 { --w: 158; --h: 17.300; }
.left .p11 { --w: 181; --h: 15.200; --l: 19; }
.left .r10 { --h: 21; }
.left .r11 { --h: 56.800; }
.btn { background: #eaf0f6; border-radius: calc(2 * var(--u)); box-shadow: inset 0 0 0 2px #cbd6e2; }
.left .bt1 { --w: 138.600; --h: 31.800; --l: 76; }
.left .bt1-b { --w: 109; --h: 18; --l: 15; --t: 7; }
.left .bt2 { --w: 155; --h: 31.800; --l: 12.400; }
.left .bt2-b { --w: 125; --h: 17; --l: 16; --t: 7.900; }
.left .r12 { --h: 64.200; }
.left .p12 { --w: 212; --h: 15.400; --l: 14.800; --t: 20; }
.left .r13 { --h: 23.700; }
.left .dot { --w: 10; --h: 10.300; --l: 20; --t: .7; border-radius: 50%; background: #cbd6e2; }
.left .p13 { --w: 395; --h: 15.200; --l: 7; }
.left .p14 { --w: 175; --h: 15.400; --l: 19; }

/* Scrollbars */
.scroll { position: relative; width: calc(17 * var(--u)); flex: none; background: #f1f1f1; color: #a3a3a3; }
.sc-up { --w: 8; --h: 4.400; --l: 4.500; --t: 7; }
.sc-down { --w: 8; --h: 4.400; --l: 4.500; --t: 36; color: #505050; transform: rotate(180deg); }
.thumb { background: #c1c1c1; }
.th-left { --w: 14.300; --h: 718.800; --l: 1.300; --t: 5; border-radius: 3px; }
.th-mid { --w: 13; --h: 402.900; --l: 1.500; --t: 5.600; }
.th-page { --w: 13; --h: 888.800; --l: 2; --t: 5.600; }
.toggle { position: absolute; z-index: 2; left: calc(-8 * var(--u)); top: calc(31.400 * var(--u)); --w: 32.800; --h: 32.800; border-radius: 50%; background: #425b76; display: flex; align-items: center; justify-content: center; }
.tog-ic { --w: 13; --h: 12; --t: 1.500; }

/* Record column */
.center { display: flex; flex-direction: column; width: calc(952.500 * var(--u)); flex: none; padding-left: calc(28.600 * var(--u)); background: #f5f8fa; box-shadow: inset 2px 0 0 #dfe6ee; overflow: hidden; }
.center .tabs { position: relative; --w: 895.700; --h: 50.600; margin-top: calc(15.600 * var(--u)); box-shadow: inset 0 -4px 0 #dde5ee; }
.tabs .t1 { --w: 67.700; --h: 15.900; --l: 29; --t: 17.700; }
.tabs .t2 { --w: 115.100; --h: 48.500; --l: 27.600; --t: 1.100; background: #eaeff6; }
.tabs .t2-b { --w: 63.200; --h: 15.300; --l: 26.900; --t: 17; }
.cust { --h: 46.400; }
.cust .cust-gear { --w: 10; --h: 10; --l: 777.400; --t: 25.800; color: #7c98b6; }
.cust .cust-b { --w: 95; --h: 13.200; --l: 6; --t: 23.600; }
.card { position: relative; --w: 895.700; background: #fff; border-radius: calc(3 * var(--u)); box-shadow: 0 calc(1 * var(--u)) calc(8 * var(--u)) rgba(45, 62, 80, .09); }
.card .btn { color: #516f90; }
.card .sq { --w: 26.600; --h: 26.800; display: flex; align-items: center; justify-content: center; }
.btn .g10 { --w: 10; --h: 10; --l: 0; --t: 0; }
.c1 { --h: 173.900; margin-bottom: calc(15.300 * var(--u)); }
.card .c1-head { --h: 91; }
.c1 .h1a { --w: 39.300; --h: 15.100; --l: 25.100; --t: 27.200; }
.c1 .h1b { --w: 87; --h: 25.700; --t: 21.900; }
.c1 .h1-btn { --l: 693.800; --t: 24; }
.c1 .over { height: calc(91 * var(--u)); }
.card .c1-r1 { --h: 21.700; }
.c1 .d1 { --w: 85.400; --h: 13.600; --l: 127; }
.c1 .d2 { --w: 113.500; --h: 13.600; --l: 178.500; }
.c1 .d3 { --w: 135.600; --h: 13.600; --l: 154.700; }
.c1 .d4 { --w: 177.300; --h: 15.900; --l: 81.100; }
.c1 .dash { --w: 10.600; --h: 3.400; --l: 184; --t: 8.300; }
.c1 .d5 { --w: 167.500; --h: 15.900; --l: 190.100; }
.c2 { --h: 269.700; margin-bottom: calc(15.100 * var(--u)); }
.card .c2-head { --h: 79.600; }
.c2 .e1 { --w: 136; --h: 19.500; --l: 22.900; --t: 23.800; }
.card .c2-filter { --h: 40; }
.c2 .e2 { --w: 59.700; --h: 17.600; --l: 22.900; }
.c2 .funnel { --w: 7.400; --h: 10.500; --l: 7.400; --t: 5.300; }
.c2 .e3 { --w: 67.900; --h: 15.500; --l: 3.300; --t: 2.100; }
.c2 .e-car1 { --w: 9.500; --h: 6; --l: 2.500; --t: 8.900; }
.c2 .e4 { --w: 83.600; --h: 15.500; --l: 582.500; --t: 2.100; }
.c2 .e-car2 { --w: 9.100; --h: 4.600; --l: 3.100; --t: 7; }
.card .item { --w: 847.600; --l: 24.200; border-radius: calc(3 * var(--u)); box-shadow: inset 0 0 0 4px #e3eaf2; }
.card .it1 { --h: 56.100; margin-bottom: calc(14.900 * var(--u)); }
.card .it2 { --h: 55.100; }
.item .it-ch { --w: 5.800; --h: 9.400; --l: 16.800; --t: 20.400; }
.item .it-disc { --w: 34; --h: 33.800; --l: 11; --t: 13; border-radius: 50%; background: #eaf0f6; }
.item .d2nd { --h: 32.600; }
.it-disc svg { display: block; width: 100%; height: 100%; }
.item .f1 { --w: 418.200; --h: 19.700; --l: 8.900; --t: 21.900; }
.item .f2 { --w: 25.700; --h: 13.600; --l: 170.200; --t: 24; }
.item .f-ic { --w: 9.200; --h: 10.600; --l: 1.200; --t: 26.400; }
.item .f3 { --w: 127.700; --h: 13.600; --l: 1.800; --t: 24; }
.item .f4 { --w: 418.200; --h: 17.800; --l: 8.900; --t: 23; }
.item .f5 { --w: 167.800; --h: 13.800; --l: 168; --t: 23; }
.c3 { --h: 139.900; margin-bottom: calc(15.200 * var(--u)); }
.card .c3-head { --h: 80.400; }
.c3 .k1 { --w: 73.800; --h: 15.600; --l: 22.900; --t: 26.800; }
.card .add { --w: 68; --h: 26.900; --l: 669.200; --t: 24.900; }
.card .add2 { --l: 648.500; --t: 23.800; }
.add .add-ic { --w: 10.400; --h: 10.900; --l: 14.400; --t: 8; }
.add .add-b { --w: 26; --h: 14; --l: 6.400; --t: 5.900; }
.card .k-sq { --l: 11.300; --t: 24.900; }
.card .k-sq2 { --l: 11.300; --t: 23.800; }
.c3 .k2 { --w: 266.500; --h: 16.500; --l: 314.400; }
.c4 { --h: 140; }
.c4 .k3 { --w: 97; --h: 22; --l: 20.400; --t: 23.300; }
.c4 .k4 { --w: 265; --h: 15; --l: 315.400; }

/* Associations column */
.right { position: relative; width: calc(458.500 * var(--u)); flex: none; background: #fff; box-shadow: inset 2px 0 0 #dfe6ee; overflow: hidden; }
.s0 { --h: 130.600; }
.sec .s0-h { --h: 61.600; }
.sec .q-chev { --w: 9.600; --h: 5.200; --l: 18; --t: 24.400; color: #0aa3bb; }
.sec .q1 { --w: 103.100; --h: 17; --l: 16.500; --t: 20; }
.sec .q-plus { --w: 7.700; --h: 7.200; --l: 251.600; --t: 24.400; color: #2b8fb3; }
.sec .q2 { --w: 31; --h: 17.600; --l: 2; --t: 17.600; }
.sec .s0-r { --h: 25.700; }
.sec .q3 { --w: 373; --h: 17.400; --l: 20.500; }
.sec .q4 { --w: 50; --h: 14.100; --l: 18; }
.s1 { --h: 107.100; }
.sec .rc { --w: 10.200; --h: 5.300; --l: 18; --t: 24.600; }
.sec .rp { --w: 8.100; --h: 7.200; --t: 24.600; }
.sec .s1-h { --h: 61.700; }
.sec .u1 { --w: 65.800; --h: 18; --l: 15.900; --t: 18.700; }
.sec .u1p { --l: 288.900; }
.sec .u2 { --w: 29.800; --h: 16.100; --l: 3.100; --t: 18.700; }
.sec .u3 { --w: 395.700; --h: 19; --l: 18; }
.sec .s2-h { --h: 62.600; }
.sec .v1 { --w: 75.700; --h: 18; --l: 15.900; --t: 17.500; }
.sec .v1p { --l: 279; }
.sec .v2 { --w: 31.700; --h: 18; --l: 1.200; --t: 17.500; }
.sec .v3 { --w: 375.800; --h: 17.100; --l: 18; }
.s3 { --h: 179.200; }
.sec .w1 { --w: 129.700; --h: 17.800; --l: 15.900; --t: 18.700; }
.sec .w2 { --w: 29.800; --h: 14; --l: 222.200; --t: 20.400; }
.sec .w-car { --w: 9.700; --h: 4.600; --l: 2.700; --t: 24.600; }
.sec .s3-r1 { --h: 24; }
.sec .w3 { --w: 103.600; --h: 16; --l: 20.200; }
.sec .lt { --w: 9; --h: 8.600; --t: 4.600; }
.sec .lt1 { --l: 2.200; }
.sec .lt2 { --l: .9; }
.sec .w4 { --w: 194; --h: 17.800; --l: .9; }
.sec .w5 { --w: 90; --h: 17.800; --l: 2.800; }
.sec .s3-r2 { --h: 34.900; }
.sec .w6 { --w: 68; --h: 16; --l: 18; --t: 1.800; }
.sec .w7 { --w: 279.900; --h: 17.800; --l: 1.600; }
.sec .rb { --w: 131.300; --h: 33.500; --l: 163.900; }
.sec .rb2 { --h: 32.800; }
.sec .rb-b { --w: 99.200; --h: 15; --l: 16.400; --t: 9.500; }
.s4 { --h: 106.700; }
.sec .s4-h { --h: 63.300; }
.sec .x1 { --w: 87.800; --h: 18.100; --l: 15.900; --t: 17.300; }
.sec .x1p { --l: 266.900; }
.sec .x2 { --w: 31.700; --h: 18.100; --l: 1.200; --t: 17.300; }
.sec .x3 { --w: 283.700; --h: 16; --l: 20.200; }
.s5 { --h: 155.500; }
.sec .s5-h { --h: 60.500; }
.sec .y1 { --w: 123.500; --h: 18.200; --l: 14; --t: 18.600; }
.sec .y-plus { --w: 7.700; --h: 7.700; --l: 220.100; --t: 24.600; color: #b4c4d6; }
.sec .y2 { --w: 31.700; --h: 16.100; --l: 2.500; --t: 18.600; }
.sec .s5-r { --h: 37.300; }
.sec .y3 { --w: 357.900; --h: 20.200; --l: 18; }
.sec .s6-h { --h: 62.200; }
.sec .z1 { --w: 97.200; --h: 19.500; --l: 14.600; --t: 18.300; }
.sec .z2 { --w: 29.800; --h: 16; --l: 243.900; --t: 19; }
.sec .z-car { --w: 9.700; --h: 4.600; --l: 2.800; --t: 24.200; }
.sec .z3 { --w: 291.700; --h: 15.700; --l: 20.200; --t: 1.100; }
.sec .z-a { --w: 9.300; --h: 12; --l: 1.900; --t: 1.600; }
.sec .z4 { --w: 76.900; --h: 17.500; --l: 1.900; }

/* Desktop taskbar */
.taskbar { height: calc(40 * var(--u)); background: linear-gradient(90deg, #20363f 0, #21373f 45%, #20333f 65%, #1c2c40 85%, #1a2640 100%); }
.taskbar .k-win { --w: 17; --h: 16; --l: 15.600; --t: 12; }
.taskbar .k-search { --w: 288; --h: 40; --l: 15.400; background: #f2f2f2; box-shadow: inset 0 0 0 2px #c8c8c8; }
.k-search .k-mag { --w: 16.300; --h: 16; --l: 11.700; --t: 12; }
.k-search .k-text { --w: 131; --h: 17.400; --l: 11; --t: 12.600; }
.k-search .k-ill { --w: 79; --h: 40; --l: 39; }
.app { --h: 40; width: calc(49 * var(--u)); display: flex; align-items: center; justify-content: center; }
.taskbar .tv { width: calc(50.500 * var(--u)); padding-right: calc(2.500 * var(--u)); }
.app.open { background: linear-gradient(#76b9ed, #76b9ed) bottom center / calc(40 * var(--u)) calc(2 * var(--u)) no-repeat; }
.app.active { background: linear-gradient(#76b9ed, #76b9ed) bottom / 100% calc(2 * var(--u)) no-repeat, linear-gradient(90deg, #4f6069 0 91%, #2b3d46 91% 93%, #44555e 93%); }
.app.razer { background: linear-gradient(#ff7800, #ff7800) bottom / 100% calc(2 * var(--u)) no-repeat, #a66833; }
.i16 { --w: 16; --h: 15.500; }
.i24 { --w: 24; --h: 24; }
.i22 { --w: 22; --h: 22; }
.i-mail { --w: 34; --h: 28; --l: 9; --t: 4; }
.i-disc { --w: 28; --h: 28; --l: 3; --t: 4; }
.badge5, .badge9, .badgeT { font-family: "Open Sans", sans-serif; text-anchor: middle; fill: #fff; }
.badge5 { font-size: 12px; font-weight: 600; }
.badge9 { font-size: 10px; font-weight: 600; }
.badgeT { font-size: 8px; font-weight: 700; fill: #dd6d72; }
.taskbar .y-coin { --w: 22.400; --h: 23; --l: 452.100; --t: 9; }
.taskbar .y-b1 { --w: 61; --h: 15; --l: 8; --t: 13; }
.taskbar .y-b2 { --w: 47; --h: 15; --l: 9; --t: 13; }
.taskbar .y-up { --w: 12; --h: 8; --l: 23; --t: 16; }
.taskbar .y-cam { --w: 11; --h: 16; --l: 13; --t: 12; }
.taskbar .y-mon { --w: 16; --h: 13; --l: 10; --t: 14; }
.taskbar .y-b3 { --w: 27; --h: 15; --l: 8; --t: 13; }
.taskbar .clock { --w: 63; --h: 40; --l: 9; }
.clock .y-b4 { --w: 29; --h: 13; --l: 16; --t: 5; }
.clock .y-b5 { --w: 63; --h: 15; --l: 0; --t: 3; }
.taskbar .y-note { --w: 27.600; --h: 28.200; --l: 11.600; --t: 7.600; }
.y-line { width: 2px; height: 100%; margin-left: calc(12.400 * var(--u)); background: #5d6878; }
```
